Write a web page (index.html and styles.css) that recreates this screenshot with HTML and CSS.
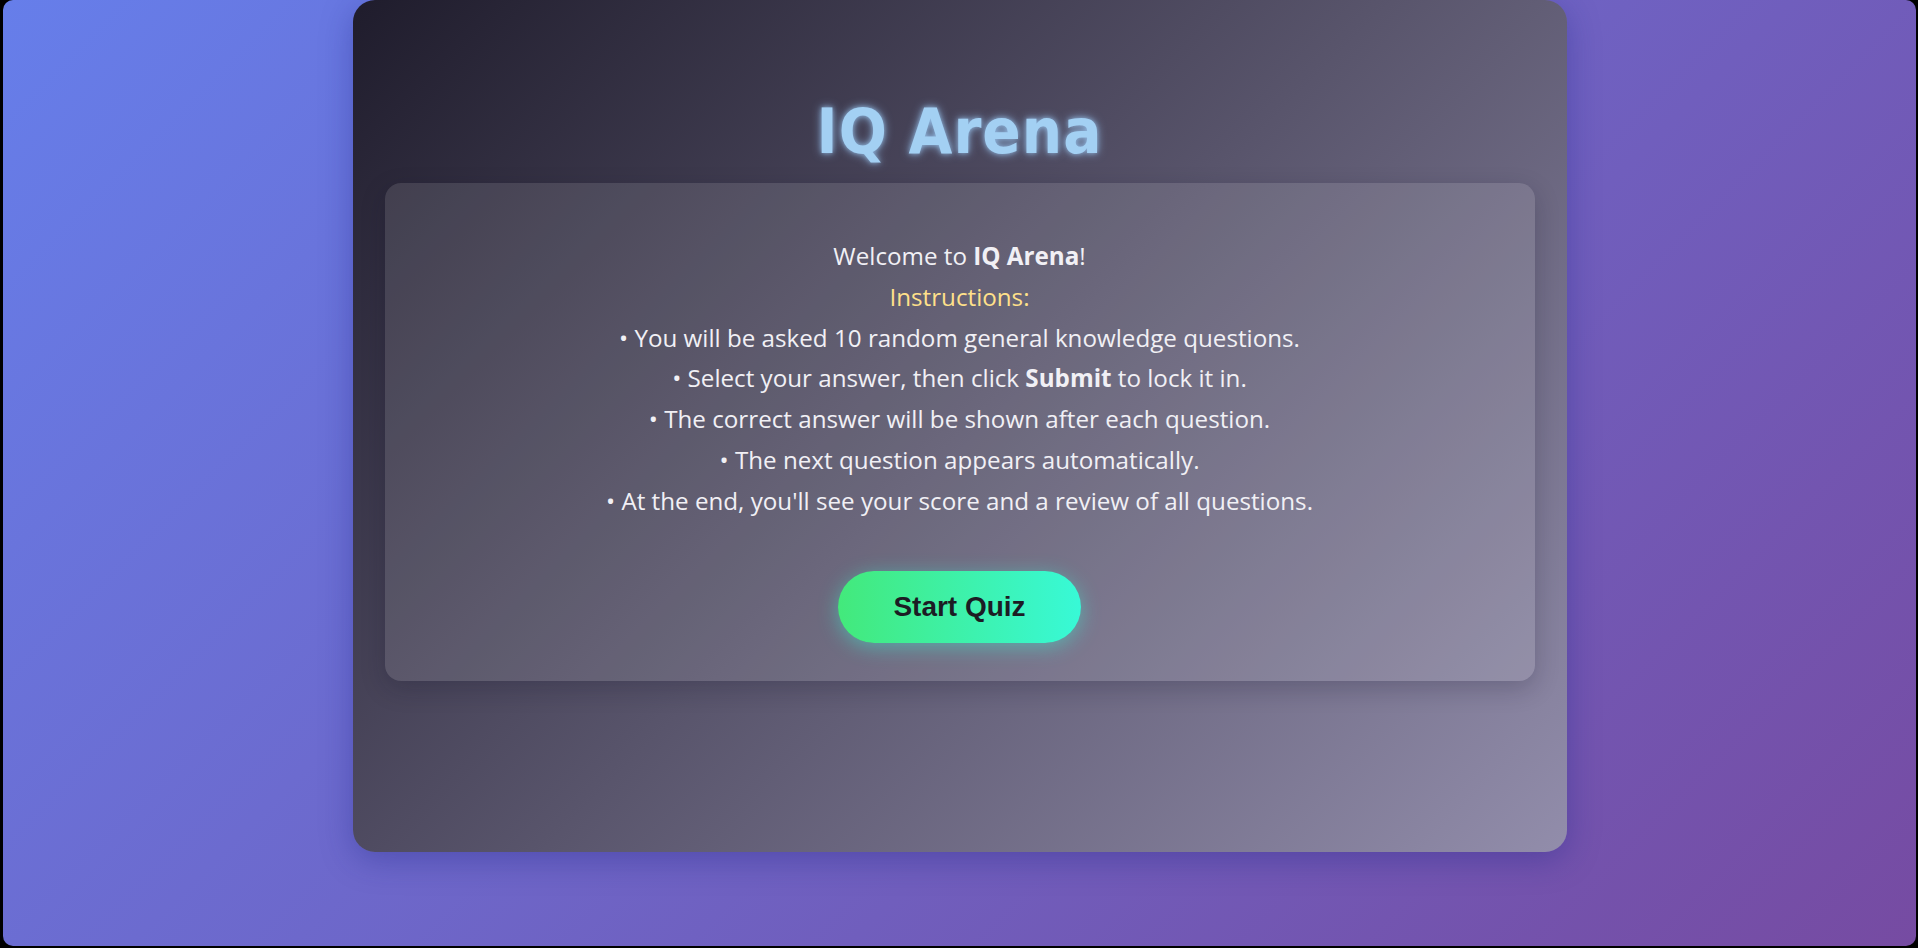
FILE: index.html
```html
<!DOCTYPE html>
<html lang="en">
<head>
<meta charset="UTF-8">
<title>IQ Arena</title>
<link rel="stylesheet" href="styles.css">
</head>
<body>
<main class="quiz-card">
  <h1 class="title">IQ Arena</h1>
  <section class="panel">
    <p class="intro">
      Welcome to <strong>IQ Arena</strong>!<br>
      <span class="label">Instructions:</span><br>
      • You will be asked 10 random general knowledge questions.<br>
      • Select your answer, then click <strong>Submit</strong> to lock it in.<br>
      • The correct answer will be shown after each question.<br>
      • The next question appears automatically.<br>
      • At the end, you'll see your score and a review of all questions.
    </p>
    <button class="start-btn" type="button">Start Quiz</button>
  </section>
</main>
</body>
</html>
```
FILE: styles.css
```css
* { box-sizing: border-box; }

html {
  background: #000;
  height: 100%;
}

body {
  margin: 0 2px 2px 3px;
  height: 946px;
  border-radius: 10px;
  background: linear-gradient(135deg, #667eea 0%, #764ba2 100%);
  display: flex;
  justify-content: center;
  align-items: flex-start;
  font-family: "Open Sans", "Noto Sans", sans-serif;
  overflow: hidden;
}

.quiz-card {
  width: 1214px;
  height: 852px;
  padding: 32px 32px 0;
  border-radius: 22px;
  background: linear-gradient(135deg, #1f1c2c 0%, #928dab 100%);
  box-shadow: 0 8px 32px rgba(31, 38, 135, 0.37);
  display: flex;
  flex-direction: column;
}

.title {
  margin: 60px 0 12px;
  text-align: center;
  font-family: "DejaVu Sans Condensed", "DejaVu Sans", sans-serif;
  font-weight: bold;
  font-size: 63px;
  letter-spacing: 1px;
  line-height: 79px;
  color: #a3d0f3;
  text-shadow: 0 0 10px rgba(160, 210, 255, 0.75), 0 0 4px rgba(160, 210, 255, 0.5);
}

.panel {
  padding: 53px 32px 38px;
  border-radius: 16px;
  background: rgba(255, 255, 255, 0.11);
  box-shadow: 0 8px 24px rgba(20, 16, 40, 0.22);
  display: flex;
  flex-direction: column;
  align-items: center;
}

.intro {
  margin: 0;
  text-align: center;
  font-size: 24.2px;
  line-height: 40.8px;
  color: #f1f0f5;
}

.intro strong { font-weight: 700; }

.label { color: #ffe08a; }

.start-btn {
  margin-top: 49px;
  padding: 20px 55px;
  border: none;
  border-radius: 40px;
  background: linear-gradient(90deg, #43e97b 0%, #38f9d7 100%);
  color: #1c1c24;
  font-family: "Liberation Sans", Arial, sans-serif;
  font-weight: bold;
  font-size: 28px;
  line-height: 32px;
  box-shadow: 0 4px 20px rgba(56, 249, 215, 0.45);
  cursor: pointer;
}
```
